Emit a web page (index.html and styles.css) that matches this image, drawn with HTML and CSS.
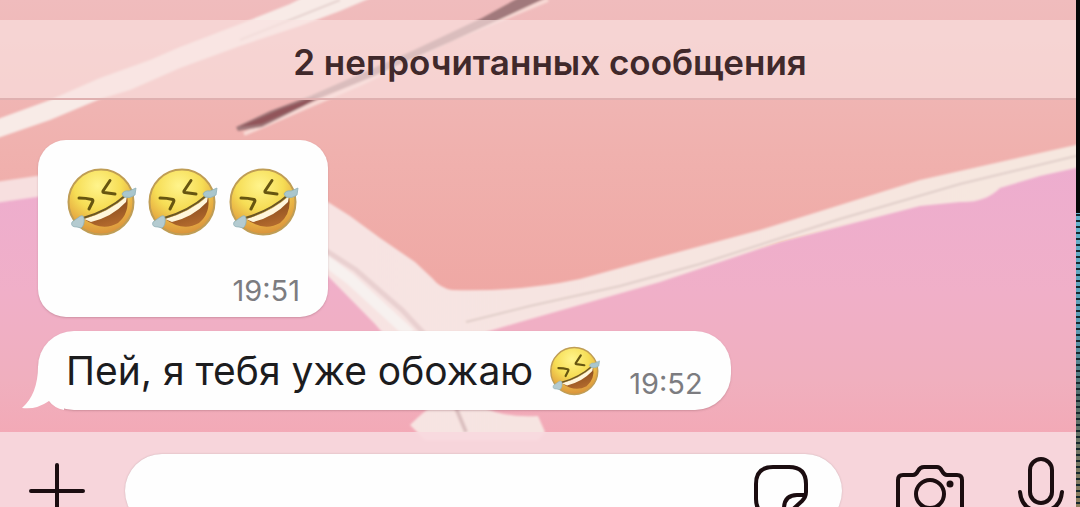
FILE: index.html
```html
<!DOCTYPE html>
<html lang="ru">
<head>
<meta charset="utf-8">
<meta name="viewport" content="width=device-width, initial-scale=1">
<title>Чат</title>
<link rel="stylesheet" href="styles.css">
</head>
<body>
<svg class="defs" width="0" height="0" aria-hidden="true">
  <defs>
    <radialGradient id="face" cx="0.45" cy="0.25" r="0.8">
      <stop offset="0" stop-color="#fff48c"/><stop offset="0.45" stop-color="#f6dd55"/><stop offset="0.75" stop-color="#e6ac42"/><stop offset="1" stop-color="#d58a3a"/>
    </radialGradient>
    <linearGradient id="mouth" x1="0" y1="0" x2="0.4" y2="1">
      <stop offset="0" stop-color="#703914"/><stop offset="1" stop-color="#b0682c"/>
    </linearGradient>
    <symbol id="rofl" viewBox="0 0 72 72">
      <circle cx="35" cy="36" r="32.5" fill="url(#face)" stroke="#bf9d55" stroke-width="2"/>
      <path d="M13 32Q20 32 26 33.500Q27.500 34 26.500 36L23 43" fill="none" stroke="#665510" stroke-width="3" stroke-linecap="round" stroke-linejoin="round"/>
      <path d="M44 14.500 37 25Q36.500 26.500 38 26.500L49 28" fill="none" stroke="#665510" stroke-width="3" stroke-linecap="round" stroke-linejoin="round"/>
      <path d="M18 53Q43 46 61 30Q64 47 52 57Q36 66 18 53Z" fill="url(#mouth)"/>
      <path d="M18 53Q43 46 61 30L60 36Q46 51 25 56Z" fill="#fff6dc"/>
      <path d="M17 52Q42 45 60 29" fill="none" stroke="#6b5523" stroke-width="2"/>
      <path d="M56 28Q58 24 63 25L70 22L69 29Q64 33 58 31Z" fill="#a9c6cd" stroke="#8fb0b8" stroke-width="0.800"/>
      <path d="M18 52Q17 48 13 51L6 56Q4 61 11 61L15 62Q19 59 18 52Z" fill="#b4cbd0" stroke="#8fb0b8" stroke-width="0.800"/>
    </symbol>
  </defs>
</svg>
<div class="screen">
  <main class="chat">
    <svg class="wallpaper" viewBox="0 0 1076 507" preserveAspectRatio="none" aria-hidden="true">
      <defs>
        <linearGradient id="coral" x1="0" y1="0" x2="0" y2="1">
          <stop offset="0" stop-color="#f0bcbd"/><stop offset="0.3" stop-color="#f0b1ae"/><stop offset="0.6" stop-color="#efa7a3"/>
        </linearGradient>
        <linearGradient id="rose" x1="0" y1="150" x2="0" y2="507" gradientUnits="userSpaceOnUse">
          <stop offset="0" stop-color="#edadd0"/><stop offset="0.4" stop-color="#f0afc8"/><stop offset="0.65" stop-color="#f0afbe"/><stop offset="0.8" stop-color="#f3a9b6"/>
        </linearGradient>
        <linearGradient id="band" x1="0" y1="0" x2="1" y2="0">
          <stop offset="0" stop-color="#f7e3e2"/><stop offset="1" stop-color="#f6e7df"/>
        </linearGradient>
        <filter id="soft" x="-5%" y="-5%" width="110%" height="110%"><feGaussianBlur stdDeviation="1"/></filter>
      </defs>
      <rect width="1076" height="507" fill="url(#coral)"/>
      <path d="M-5 190 60 182 330 240 450 322 700 265 1080 158V510H-5Z" fill="url(#rose)"/>
      <g filter="url(#soft)">
        <path d="M-5 120 50 100 100 78 150 60 180 47 240 24 290 4 310-6 380-6 340 11 300 26 240 46 180 68 130 90 100 99 50 120-5 139Z" fill="#f8ebe7"/>
        <path d="M240 40 300 16 340 0" fill="none" stroke="#e6d3d0" stroke-width="2"/>
        <path d="M-5 182 50 174V195L-5 203Z" fill="#f7dfdf"/>
        <path d="M320 197 350 216 380 238 415 262 432 278Q440 288 452 290Q520 292 580 279L660 257 760 230 920 180 1080 144V167L1040 176 1000 188Q985 203 960 202L920 206 780 242 660 282 520 322 486 332 480 405Q500 418 538 416L545 432 538 440H425L410 425Q425 410 440 400L375 324 320 268Z" fill="url(#band)"/>
        <path d="M322 248 356 270 402 310 430 340" fill="none" stroke="#e9d0d0" stroke-width="5"/>
        <path d="M322 258 350 279 410 334" fill="none" stroke="#f7f1ef" stroke-width="11"/>
        <path d="M466 322 530 306 620 286 700 264 840 219 960 184 1080 155" fill="none" stroke="#dfcdc8" stroke-width="2"/>
        <path d="M456 408 466 432" fill="none" stroke="#dbc0c0" stroke-width="4"/>
        <path d="M244 134 360 84 450 40 548 0" fill="none" stroke="#f8dad5" stroke-width="4"/>
        <path d="M236 127 270 111 310 96 410 52 482 18 522-4 550-4 490 24 370 78 320 98 262 127 238 131Z" fill="#a1797b"/>
        <path d="M239 127 280 109 320 95 304 105 262 124Z" fill="#91555a"/>
      </g>
    </svg>
    <h1 class="unread">2 непрочитанных сообщения</h1>
    <section class="thread" aria-label="Сообщения">
      <article class="bubble bubble-large">
        <div class="emoji-row" role="img" aria-label="🤣🤣🤣">
          <svg class="emoji-large"><use href="#rofl"/></svg>
          <svg class="emoji-large"><use href="#rofl"/></svg>
          <svg class="emoji-large"><use href="#rofl"/></svg>
        </div>
        <time class="time">19:51</time>
      </article>
      <article class="bubble bubble-line">
        <svg class="tail" viewBox="0 0 44 44" aria-hidden="true"><path d="M18 0Q18 28 2 42Q16 44 29 35Q34 42 44 44V0Z" fill="#fefefe"/></svg>
        <p class="text">Пей, я тебя уже обожаю</p>
        <svg class="emoji" role="img" aria-label="🤣"><use href="#rofl"/></svg>
        <time class="time">19:52</time>
      </article>
    </section>
    <form class="composer">
      <button class="tool" type="button" aria-label="Прикрепить">
        <svg width="56" height="56" viewBox="0 0 56 56"><path d="M2 28H54M28 2V54"/></svg>
      </button>
      <div class="field">
        <input class="input" type="text" aria-label="Сообщение">
        <button class="tool" type="button" aria-label="Стикеры">
          <svg width="54" height="52" viewBox="0 0 54 52"><path d="M29 50H18Q2 50 2 34V19Q2 2 19 2H35Q52 2 52 19V27Q52 32 48 36L36 47Q33 50 29 50ZM30 49V44Q30 30 43 30H51"/></svg>
        </button>
      </div>
      <button class="tool" type="button" aria-label="Камера">
        <svg width="68" height="52" viewBox="0 0 68 52"><path d="M2 45V15Q2 10 7 10H17Q20 10 22 6Q24 2 28 2H41Q44 2 46 6Q48 10 51 10H61Q66 10 66 15V45Q66 50 61 50H7Q2 50 2 45Z"/><circle cx="34" cy="29" r="14"/><circle class="dot" cx="54" cy="19" r="3.500"/></svg>
      </button>
      <button class="tool" type="button" aria-label="Голосовое сообщение">
        <svg width="46" height="68" viewBox="0 0 46 68"><rect x="12" y="2" width="22" height="44" rx="11"/><path d="M2 35Q4 54 23 54T44 35M23 54V66"/></svg>
      </button>
    </form>
  </main>
  <div class="edge" aria-hidden="true"></div>
</div>
</body>
</html>
```
FILE: styles.css
```css
* { box-sizing: border-box; }

body {
  margin: 0;
  font-family: Inter, "Noto Sans", sans-serif;
}

.defs { position: absolute; }

.screen {
  display: flex;
  height: 100vh;
  overflow: hidden;
}

.chat {
  position: relative;
  isolation: isolate;
  display: flex;
  flex-direction: column;
  flex: 1;
  min-width: 0;
  padding-top: 20px;
  overflow: hidden;
}

.wallpaper {
  position: absolute;
  inset: 0;
  z-index: -1;
  width: 100%;
  height: 100%;
}

.edge {
  flex: none;
  width: 4px;
  background:
    linear-gradient(#050707 0 42%, transparent 42%),
    repeating-linear-gradient(transparent 0 4px, #16282d 4px 6px),
    linear-gradient(#68b5cf 42%, #5b9cb5 65%, #526f6d 78%, #8f7d5c 100%);
}

.unread {
  flex: none;
  margin: 0;
  padding: 22px 0 16px 24px;
  border-bottom: 2px solid #dfb0b0;
  background: rgba(249, 226, 224, 0.65);
  color: #40292b;
  font-size: 35px;
  font-weight: 600;
  line-height: 40px;
  text-align: center;
}

.thread {
  display: flex;
  flex: none;
  flex-direction: column;
  align-items: flex-start;
  gap: 14px;
  padding: 40px 38px 22px;
}

.bubble {
  display: flex;
  background: #fefefe;
  box-shadow: 0 1px 2px rgba(140, 90, 100, 0.35);
}

.bubble-large {
  flex-direction: column;
  justify-content: space-between;
  min-height: 177px;
  padding: 26px 28px 10px;
  border-radius: 28px;
}

.emoji-row {
  display: flex;
  gap: 9px;
}

.emoji-large { width: 72px; height: 72px; }

.emoji { width: 52px; height: 52px; }

.bubble-line {
  position: relative;
  align-items: center;
  min-height: 79px;
  padding: 0 28px;
  border-radius: 36px;
}

.tail {
  position: absolute;
  bottom: 0;
  left: -18px;
  width: 44px;
  height: 44px;
}

.text {
  margin: 0 16px 0 0;
  color: #1c1c1e;
  font-size: 39px;
  line-height: 44px;
}

.time {
  align-self: flex-end;
  color: #7c7c80;
  font-size: 29px;
  line-height: 32px;
}

.bubble-line .time {
  margin-left: 28px;
  padding-bottom: 10px;
}

.composer {
  display: flex;
  flex: none;
  align-items: center;
  padding: 22px 12px 22px 29px;
  background: rgba(247, 217, 222, 0.92);
}

.tool {
  flex: none;
  padding: 0;
  border: 0;
  background: none;
}

.tool svg {
  display: block;
  fill: none;
  stroke: #1b0d10;
  stroke-width: 4;
  stroke-linecap: round;
  stroke-linejoin: round;
}

.tool .dot { fill: #1b0d10; stroke: none; }

.field {
  display: flex;
  flex: 1;
  align-items: center;
  min-width: 0;
  height: 74px;
  margin: 0 54px 0 40px;
  padding: 0 34px;
  border-radius: 37px;
  background: #fefefe;
  box-shadow: 0 0 2px #c9aeb3;
}

.input {
  flex: 1;
  min-width: 0;
  border: 0;
  outline: 0;
  background: none;
  font: inherit;
  font-size: 36px;
}

.tool + .tool { margin-left: 54px; }
```
